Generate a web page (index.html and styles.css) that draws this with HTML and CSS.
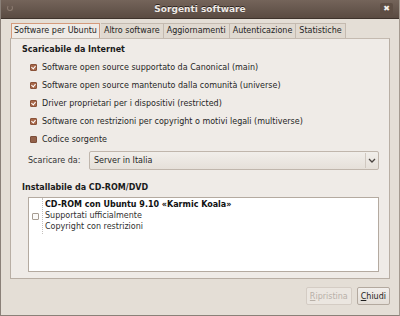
FILE: index.html
```html
<!DOCTYPE html>
<html lang="it">
<head>
    <meta charset="UTF-8" />
    <link rel="stylesheet" href="styles.css">
    <title>Sorgenti software</title>
</head>
<body>
    <div class="window">
        <div class="titlebar">
            <span class="menu-dot"></span>
            <span class="title">Sorgenti software</span>
            <span class="close">&#x2716;</span>
        </div>

        <div class="body">
            <div class="tabs">
                <div class="tab active">Software per Ubuntu</div>
                <div class="tab">Altro software</div>
                <div class="tab">Aggiornamenti</div>
                <div class="tab">Autenticazione</div>
                <div class="tab">Statistiche</div>
            </div>

            <div class="page">
                <p class="heading">Scaricabile da Internet</p>
                <div class="checks">
                    <label class="check"><span class="box on"></span>Software open source supportato da Canonical (main)</label>
                    <label class="check"><span class="box on"></span>Software open source mantenuto dalla comunità (universe)</label>
                    <label class="check"><span class="box on"></span>Driver proprietari per i dispositivi (restricted)</label>
                    <label class="check"><span class="box on"></span>Software con restrizioni per copyright o motivi legali (multiverse)</label>
                    <label class="check"><span class="box mixed"></span>Codice sorgente</label>
                </div>

                <div class="server">
                    <span class="server-label">Scaricare da:</span>
                    <div class="combo">
                        <span class="combo-text">Server in Italia</span>
                        <span class="combo-arrow">
                            <svg width="8" height="5" viewBox="0 0 8 5"><path d="M1 1 L4 4 L7 1" fill="none" stroke="#4a4440" stroke-width="1.3"/></svg>
                        </span>
                    </div>
                </div>

                <p class="heading cd">Installabile da CD-ROM/DVD</p>
                <div class="list">
                    <div class="list-row">
                        <span class="list-check"><span class="box empty"></span></span>
                        <div class="list-text">
                            <b>CD-ROM con Ubuntu 9.10 «Karmic Koala»</b>
                            <span>Supportati ufficialmente</span>
                            <span>Copyright con restrizioni</span>
                        </div>
                    </div>
                </div>
            </div>

            <div class="buttons">
                <button class="btn" disabled><u>R</u>ipristina</button>
                <button class="btn"><u>C</u>hiudi</button>
            </div>
        </div>
    </div>
</body>
</html>
```

FILE: styles.css
```css
* {
    margin: 0;
    padding: 0;
    box-sizing: border-box;
}

body {
    font-family: 'DejaVu Sans', sans-serif;
    font-size: 8px;
    color: #1a1a1a;
    background: #e4ded6;
}

.window {
    width: 400px;
    height: 316px;
    display: flex;
    flex-direction: column;
    border-left: 1px solid #8a8078;
    border-right: 1px solid #a49a90;
    border-bottom: 1px solid #8a8078;
    background: #e4ded6;
}

.titlebar {
    height: 19px;
    display: flex;
    align-items: center;
    justify-content: center;
    position: relative;
    background: linear-gradient(#74645a, #5a4b42);
    border-bottom: 1px solid #3e332c;
}

.title {
    color: #eeeae6;
    font-weight: 700;
    font-size: 9px;
    text-shadow: 0 -1px 0 #2e251f;
}

.menu-dot {
    position: absolute;
    left: 6px;
    top: 5px;
    width: 6px;
    height: 6px;
    border-radius: 50%;
    border: 1px solid #8c7b70;
    border-top-color: transparent;
}

.close {
    position: absolute;
    right: 6px;
    top: 3px;
    width: 13px;
    height: 12px;
    font-size: 8px;
    line-height: 12px;
    text-align: center;
    color: #f4f0ec;
    background: #5e4e44;
    border-radius: 2px;
}

.body {
    flex: 1;
    display: flex;
    flex-direction: column;
    padding: 4px 9px 0 9px;
}

.tabs {
    display: flex;
    height: 15px;
    padding-left: 1px;
}

.tab {
    padding: 2px 3px 0 3px;
    border: 1px solid #c4bab0;
    border-bottom: none;
    border-left: none;
    background: #e0d9d0;
    color: #242424;
    white-space: nowrap;
}

.tab.active {
    padding: 2px 2px 0 2px;
    background: #efebe7;
    border: 1px solid #d49a7c;
    border-bottom: none;
    margin-right: 1px;
}

.page {
    height: 241px;
    background: #efebe7;
    border: 1px solid #b8aea4;
    border-top-color: #c4bab0;
    padding: 6px 10px 0 11px;
}

.heading {
    font-weight: 700;
    height: 12px;
}

.checks {
    display: flex;
    flex-direction: column;
    padding-left: 8px;
    padding-top: 1px;
}

.check {
    display: flex;
    align-items: center;
    height: 18px;
    color: #262626;
}

.box {
    width: 7px;
    height: 7px;
    margin-right: 5px;
    border-radius: 1px;
    flex-shrink: 0;
    position: relative;
}

.box.on {
    background: #a8684a;
    border: 1px solid #8a5238;
}

.box.on::after {
    content: "";
    position: absolute;
    left: 1px;
    top: 0;
    width: 2px;
    height: 3px;
    border-right: 1px solid #fff;
    border-bottom: 1px solid #fff;
    transform: rotate(40deg);
}

.box.mixed {
    background: #93614a;
    border: 1px solid #7c4e3a;
}

.box.empty {
    background: #fbfaf9;
    border: 1px solid #a69c92;
}

.server {
    display: flex;
    align-items: center;
    margin-top: 3px;
    padding-left: 6px;
}

.server-label {
    width: 61px;
    color: #333;
}

.combo {
    flex: 1;
    height: 19px;
    display: flex;
    align-items: center;
    border: 1px solid #c0b6ac;
    border-radius: 2px;
    background: linear-gradient(#f1eeea, #e6e0d9);
}

.combo-text {
    flex: 1;
    padding-left: 4px;
    color: #262626;
}

.combo-arrow {
    width: 13px;
    height: 15px;
    border-left: 1px solid #d0c8c0;
    display: flex;
    align-items: center;
    justify-content: center;
}

.heading.cd {
    margin-top: 13px;
}

.list {
    margin: 2px 0 0 6px;
    height: 75px;
    background: #fff;
    border: 1px solid #b4aaa0;
}

.list-row {
    display: flex;
}

.list-check {
    width: 14px;
    height: 36px;
    display: flex;
    align-items: center;
    justify-content: center;
    border-right: 1px dotted #c4c0bc;
}

.list-check .box {
    margin-right: 0;
}

.list-text {
    display: flex;
    flex-direction: column;
    padding: 1px 0 0 2px;
    line-height: 11px;
    color: #303030;
}

.list-text b {
    color: #111;
}

.buttons {
    display: flex;
    justify-content: flex-end;
    gap: 5px;
    margin-top: 8px;
}

.btn {
    font-family: 'DejaVu Sans', sans-serif;
    font-size: 8px;
    height: 18px;
    padding: 0 3px;
    border: 1px solid #b3a99f;
    border-radius: 2px;
    background: linear-gradient(#f2efec, #e4ded7);
    color: #1e1e1e;
}

.btn:disabled {
    color: #b8b0a8;
    border-color: #d4ccc4;
    background: #ebe6e0;
}
```
